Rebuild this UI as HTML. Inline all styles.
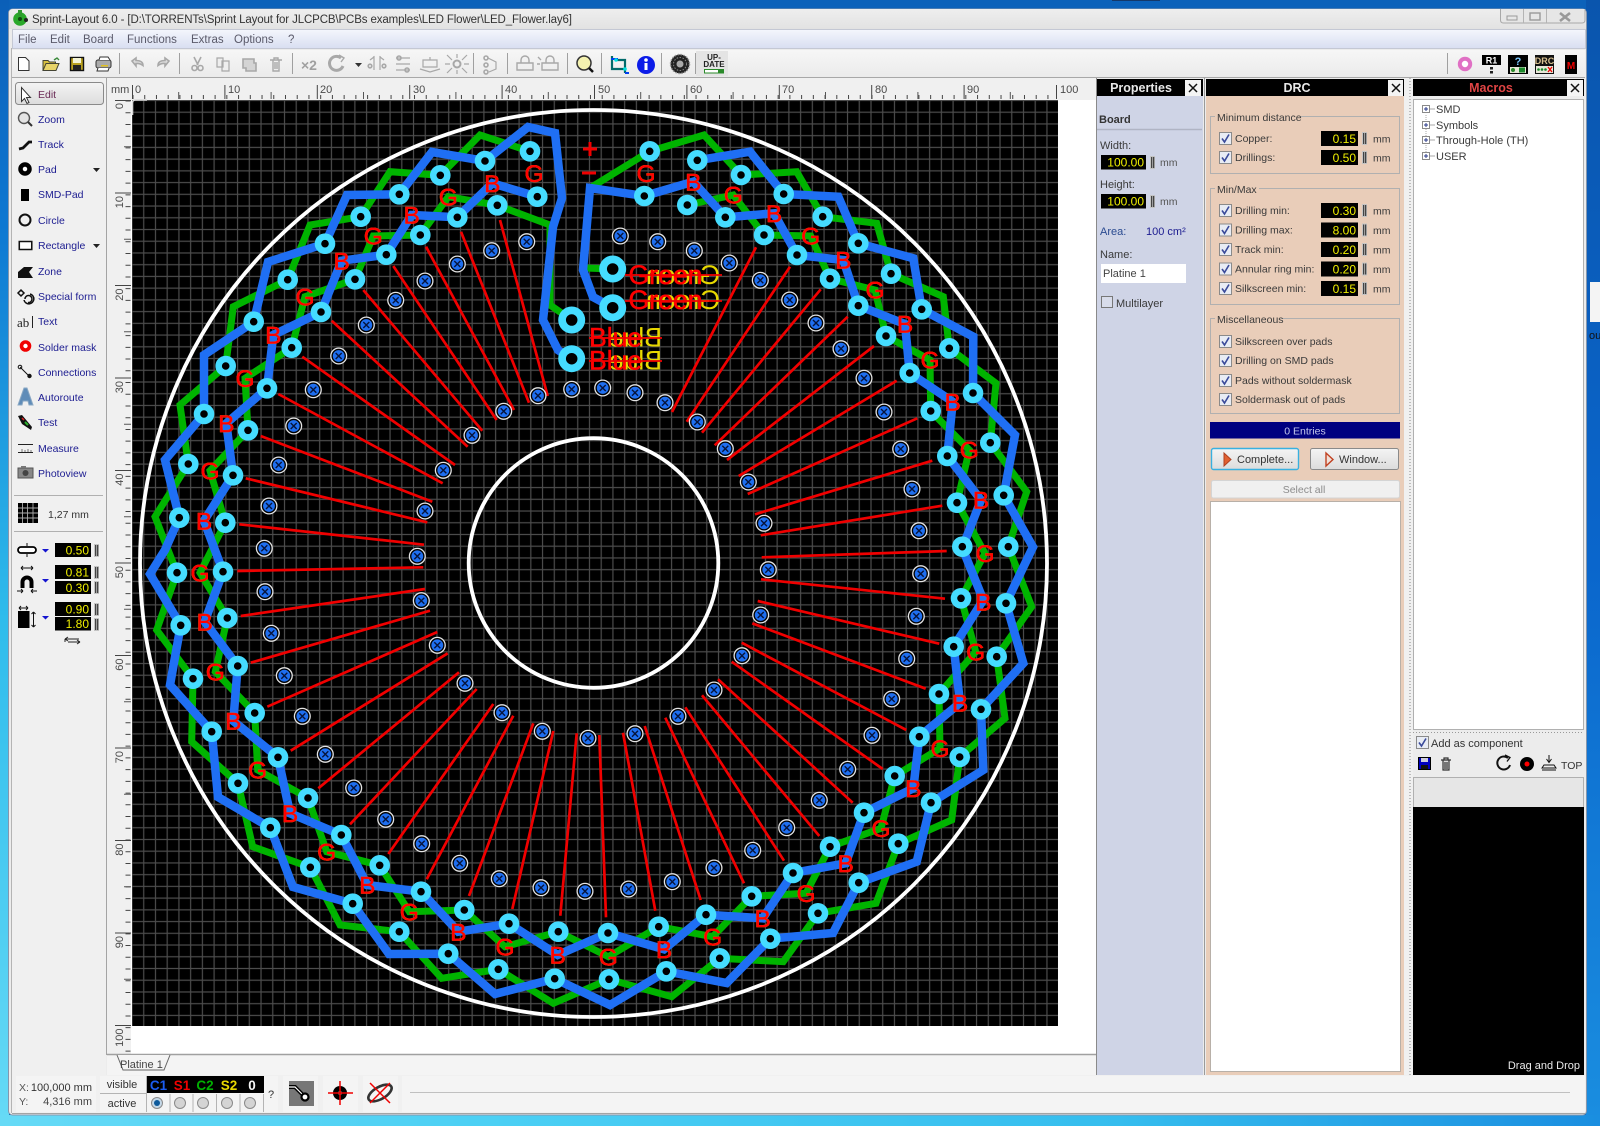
<!DOCTYPE html>
<html><head><meta charset="utf-8"><title>Sprint-Layout 6.0</title>
<style>
html,body{margin:0;padding:0;background:#0d62b8;overflow:hidden}
svg{display:block;filter:blur(.35px)}
text{font-family:"Liberation Sans",sans-serif;font-size:10.5px;fill:#3a3a3a}
.n text,text.n{fill:#1c1c90}
.m{font-size:11.5px;fill:#5a5a6a}
.y{font-size:12px;fill:#f0f000;text-anchor:end}
.h{font-size:12.5px;font-weight:bold;fill:#e8e8e8;text-anchor:middle}
.r{font-size:11px;fill:#4a4a4a}
.l{filter:drop-shadow(.7px .7px 0 #e0d000)}
.l text{font-size:24.5px;fill:#f00;text-anchor:middle;stroke:#f00;stroke-width:.45}
.s{font-size:26.6px;fill:#f00;stroke:#f00;stroke-width:.5}
.sy{font-size:26.6px;fill:#e8d800}
.ly{font-size:13.5px;font-weight:bold;text-anchor:middle}
</style></head><body>
<svg xmlns="http://www.w3.org/2000/svg" width="1600" height="1126" viewBox="0 0 1600 1126">
<defs>
<linearGradient id="bgL" x1="0" y1="0" x2="0" y2="1"><stop offset="0" stop-color="#0b5fb8"/><stop offset=".2" stop-color="#0d78d2"/><stop offset=".55" stop-color="#2fbcec"/><stop offset="1" stop-color="#66daf6"/></linearGradient>
<linearGradient id="bgR" x1="0" y1="0" x2="0" y2="1"><stop offset="0" stop-color="#0a55ad"/><stop offset=".5" stop-color="#0a66cc"/><stop offset="1" stop-color="#1a8ee0"/></linearGradient>
<linearGradient id="bgB" x1="0" y1="0" x2="1" y2="0"><stop offset="0" stop-color="#66daf6"/><stop offset=".3" stop-color="#4cd0f4"/><stop offset=".7" stop-color="#35bdee"/><stop offset="1" stop-color="#1a8ee0"/></linearGradient>
<linearGradient id="tit" x1="0" y1="0" x2="0" y2="1"><stop offset="0" stop-color="#eeeeee"/><stop offset="1" stop-color="#e2e2e2"/></linearGradient>
<linearGradient id="men" x1="0" y1="0" x2="0" y2="1"><stop offset="0" stop-color="#f4f6fc"/><stop offset="1" stop-color="#d8def1"/></linearGradient>
<linearGradient id="tb" x1="0" y1="0" x2="0" y2="1"><stop offset="0" stop-color="#f6f6f6"/><stop offset="1" stop-color="#ebebeb"/></linearGradient>
<linearGradient id="btn" x1="0" y1="0" x2="0" y2="1"><stop offset="0" stop-color="#f4f4f4"/><stop offset="1" stop-color="#dcdcdc"/></linearGradient>
<pattern id="grid" x="131" y="99.5" width="11.73" height="11.73" patternUnits="userSpaceOnUse"><path d="M0 1H11.73M1 0V11.73" stroke="#4c4c4c" stroke-width="1.2" fill="none"/></pattern>
<g id="v"><circle r="7.9" fill="#000" stroke="#e4e4e4" stroke-width="1.3"/><circle r="5.9" fill="#1f6ff0"/><path d="M-3-3L3 3M3-3L-3 3" stroke="#06143c" stroke-width="1.4" fill="none"/></g>
<g id="ck"><rect x=".5" y=".5" width="12" height="12" fill="#e8ecf4" stroke="#8a8a8a"/><path d="M3 6.5L5.5 10L10 2.5" fill="none" stroke="#3a4a9a" stroke-width="1.6"/></g>
<g id="sp"><rect width="5" height="13" fill="#c4c4c4"/><rect x="1" y="1" width="1.3" height="11" fill="#444"/><rect x="3" y="1" width="1.3" height="11" fill="#444"/></g>
<path id="pads" d="M530 151.3h0M485 161h0M537.3 196.7h0M440.3 175.3h0M497.3 205.3h0M457.3 217.3h0M399.3 194.3h0M360.7 216.7h0M420.3 235h0M386.3 254.7h0M325 243.7h0M287.7 279.7h0M355 279.3h0M321 312h0M253.7 321.7h0M225.7 366h0M291.7 347.7h0M267 388.3h0M204 414h0M248 430.3h0M188.3 464h0M233 475.3h0M179.3 517.7h0M225.3 522.7h0M177 572.7h0M223 571.7h0M180.7 625.3h0M227.3 618h0M193 678.7h0M237.7 666h0M211.7 731.7h0M254.7 713h0M238 783.3h0M278 757.3h0M270.3 827.7h0M308 798h0M310.3 867.3h0M341.3 835h0M352.7 903.7h0M379.7 865.3h0M399.3 931.7h0M421 891.7h0M448.3 953.7h0M464.3 910h0M498.3 969.3h0M509 923.7h0M554.7 978.7h0M558.3 931.7h0M608 933h0M609 979.3h0M658.7 926.7h0M666.3 971.3h0M706 914.7h0M719.7 958.3h0M751.7 896.3h0M770.3 938.7h0M793 873h0M818 913.3h0M830 846.7h0M858.7 882.7h0M864 812.7h0M898.3 843.7h0M894.7 776h0M931 802.7h0M919.3 736.7h0M959.7 757h0M939 694h0M981 709.3h0M953.7 646.7h0M996.7 656.7h0M961 598.3h0M1006 603.3h0M962.3 546.7h0M1008.3 546.7h0M957 502.7h0M1003.7 495.3h0M947.3 456h0M990.3 442.7h0M930.7 411h0M973 393h0M909.7 373h0M949.3 348.3h0M886 336h0M921.7 309.3h0M858.3 305.7h0M891 273.7h0M830 278.7h0M858.3 243.3h0M797 255h0M822.7 216.7h0M764 235h0M783.7 194h0M725.3 217.3h0M741 175h0M687.3 205h0M697.3 160.3h0M644.3 196h0M649.7 151.3h0"/>
<path id="big" d="M612.7 269h0M612.7 307.7h0M571.7 320h0M571.7 358.7h0"/>
</defs>

<!-- desktop -->
<rect width="1600" height="1126" fill="#0c62ba"/>
<rect x="0" y="0" width="9" height="1126" fill="url(#bgL)"/>
<rect x="1586" y="0" width="14" height="1126" fill="url(#bgR)"/>
<rect x="0" y="1115" width="1600" height="11" fill="url(#bgB)"/>
<rect x="1590" y="282" width="10" height="40" fill="#f4f4f4"/>
<text x="1589" y="339" style="font-size:11px;fill:#111">ou</text>
<rect x="1112" y="0" width="48" height="1" fill="#14386a"/>

<!-- window -->
<rect x="8.5" y="9" width="1578" height="1106" rx="4" fill="#ececec" stroke="#8496ad"/>
<path d="M9 29V13q0-4 4-4H1582q4 0 4 4V29z" fill="url(#tit)"/>
<g transform="translate(20,18)"><circle cy="1" r="6.8" fill="#2aa82a"/><rect x="-2" y="-8" width="4" height="6" fill="#2f9a2f"/><circle cy="1" r="2" fill="#0e4a0e"/><circle cx="6" cy="2" r="2" fill="#222"/></g>
<text x="32" y="23" textLength="540" style="font-size:11.5px;fill:#333">Sprint-Layout 6.0 - [D:\TORRENTs\Sprint Layout for JLCPCB\PCBs examples\LED Flower\LED_Flower.lay6]</text>
<!-- window controls -->
<path d="M1500.5 9V20q0 3 3 3H1582q3 0 3-3V9" fill="#e6e6e6" stroke="#a8a8a8"/>
<path d="M1523.5 9V23M1546.5 9V23" stroke="#b4b4b4"/>
<rect x="1507" y="16" width="10" height="4" fill="none" stroke="#999"/>
<rect x="1530" y="13" width="10" height="7" fill="none" stroke="#999" stroke-width="1.4"/>
<path d="M1560 13L1570 21M1570 13L1560 21" stroke="#999" stroke-width="2.6"/>
<!-- menu -->
<rect x="12.5" y="29.5" width="1573" height="19" fill="url(#men)" stroke="#c4c8d4"/>
<g class="m"><text class="m" x="18" y="43">File</text><text class="m" x="50" y="43">Edit</text><text class="m" x="83" y="43">Board</text><text class="m" x="127" y="43">Functions</text><text class="m" x="191" y="43">Extras</text><text class="m" x="234" y="43">Options</text><text class="m" x="288" y="43">?</text></g>
<!-- toolbar -->
<rect x="12" y="50" width="1573" height="27" fill="url(#tb)"/>
<path d="M12 77.5H1585" stroke="#a8a8a8"/>
<path d="M119.5 53V74M179.5 53V74M292.5 53V74M473.5 53V74M507.5 53V74M567.5 53V74M601.5 53V74M661.5 53V74M695.5 53V74M1447.5 53V74" stroke="#a0a0a0"/>
<rect x="696" y="51" width="32" height="25" fill="#e4e4e4"/>
<!-- file icons -->
<path d="M18.500 57.500h7l3.500 3.500v9.500h-10.500z" fill="#fff" stroke="#333"/>
<path d="M43 70.500v-10h5l1.500 1.500h6v2" fill="#d8c040" stroke="#443"/><path d="M43 70.500l3-7h13l-3 7z" fill="#e8d468" stroke="#443"/><path d="M54 60l3-2 2 2" fill="none" stroke="#3a8a3a" stroke-width="1.4"/>
<rect x="70.500" y="57.500" width="13" height="13" fill="#b8a020" stroke="#111" stroke-width="1.4"/><rect x="73" y="58" width="8" height="5" fill="#f4f4d8"/><rect x="73" y="65" width="8" height="5" fill="#222"/>
<rect x="96" y="60" width="15" height="8" rx="2" fill="#aaa" stroke="#333"/><path d="M99 60l1-3h8l2 3M98 68l-1 3h11l1-3" fill="#fff" stroke="#333"/><rect x="101" y="65" width="7" height="1.500" fill="#e0c020"/>
<!-- gray icons -->
<g fill="none" stroke="#a8a8a8" stroke-width="1.6">
<path d="M132 61l4-3v2.500q7 0 7 5q-3-2.500-7-2v2.500z" fill="#ddd"/>
<path d="M169 61l-4-3v2.500q-7 0-7 5q3-2.500 7-2v2.500z" fill="#ddd"/>
<path d="M194 57l4 8M201 57l-4 8"/><circle cx="194.500" cy="68" r="2.500"/><circle cx="200.500" cy="68" r="2.500"/>
<path d="M217 58h6v9h-6zM222 61h7v10h-7z" fill="#eee" stroke-width="1.200"/>
<path d="M243 59h11v4h2v8h-10v-3h-3z" fill="#d4d4d4"/>
<path d="M270 60h12M273 60v11h6v-11M274 60v-2h4v2M275 62v7M277 62v7" stroke-width="1.400"/>
<path d="M341 58a7 7 0 1 0 2 8" stroke-width="3"/><path d="M339 55l5 3-3 4" stroke-width="1.400"/>
<path d="M374 56v14M380 56v14M370 60l4-3v6M384 60l-4-3v6" stroke-width="1.200"/><circle cx="370" cy="66" r="1.800"/><circle cx="384" cy="66" r="1.800"/>
<path d="M396 58h14M396 64h14M396 70h14" stroke-width="1.200"/><circle cx="399" cy="58" r="2"/><circle cx="407" cy="70" r="2"/>
<path d="M423 60h14v7h-14zM420 69l10 3 10-3M430 57v3" stroke-width="1.200"/>
<circle cx="457" cy="64" r="3.500" stroke-width="2"/><path d="M447 55l5 5M467 55l-5 5M447 73l5-5M467 73l-5-5M445 64h5M464 64h5M457 54v4M457 70v4" stroke-width="1.200"/>
<circle cx="486" cy="58" r="2"/><circle cx="486" cy="65" r="2"/><circle cx="486" cy="72" r="2"/><path d="M488 58l8 4v7l-7 3" stroke-width="1.200"/>
<path d="M521 63v-3a4 4 0 0 1 8 0v3M517 63h16v7h-16z" stroke-width="1.400"/>
<path d="M546 63v-3a4 4 0 0 1 8 0v3M542 63h16v7h-16zM538 57l3 3M540 64h-3" stroke-width="1.400"/>
</g>
<text x="301" y="70" style="font-size:14px;font-weight:bold;fill:#a0a0a0">×2</text>
<path d="M355 63h7l-3.500 4z" fill="#333"/>
<!-- search -->
<circle cx="584" cy="63" r="7" fill="#f4f2b0" stroke="#333" stroke-width="1.500"/><path d="M589 68l4 4" stroke="#111" stroke-width="2.500"/>
<path d="M612 56v13h13M616 60h9v13" fill="none" stroke="#006a6a" stroke-width="2.200"/><path d="M611 59h7M625 73h4" stroke="#0040f0" stroke-width="2"/><circle cx="616" cy="60" r="1.800" fill="#00e0e0"/><circle cx="625" cy="69" r="1.800" fill="#00e0e0"/>
<circle cx="646" cy="65" r="9" fill="#0c1ce8"/><rect x="644.500" y="63" width="3" height="7" fill="#fff"/><circle cx="646" cy="60" r="1.800" fill="#fff"/>
<circle cx="680" cy="64" r="9.500" fill="#222"/><circle cx="680" cy="64" r="9.500" fill="none" stroke="#999" stroke-width="1.500" stroke-dasharray="1.500 1.500"/><circle cx="680" cy="64" r="3.500" fill="#aaa"/><circle cx="680" cy="64" r="6.500" fill="none" stroke="#888" stroke-dasharray="1.500 1.500"/>
<text x="714" y="60" style="font-size:8px;font-weight:bold;fill:#222;text-anchor:middle">UP-</text>
<text x="714" y="67" style="font-size:8px;font-weight:bold;fill:#222;text-anchor:middle">DATE</text>
<rect x="704.500" y="69.500" width="19" height="3.500" fill="#fff" stroke="#2a8a2a"/><rect x="718" y="70" width="5" height="3" fill="#2a8a2a"/>
<!-- right toolbar -->
<circle cx="1465" cy="64" r="5.200" fill="#fff" stroke="#e070c4" stroke-width="4"/>
<rect x="1482" y="55" width="19" height="10" fill="#000"/><text x="1491.500" y="63.500" style="font-size:9px;font-weight:bold;fill:#fff;text-anchor:middle">R1</text><rect x="1490" y="67" width="3" height="2.500" fill="#222"/><rect x="1490" y="71" width="3" height="2.500" fill="#222"/>
<rect x="1508" y="55" width="20" height="19" fill="#000"/><text x="1518" y="65" style="font-size:11px;font-weight:bold;fill:#7cc8ff;text-anchor:middle">?</text><rect x="1510" y="67" width="16" height="6" fill="#e8e8d8"/><circle cx="1513" cy="70" r="2" fill="#2a8a2a"/><rect x="1519" y="67.500" width="6" height="5" fill="#1a8a2a"/>
<rect x="1535" y="55" width="19" height="19" fill="#111"/><text x="1544.500" y="64" style="font-size:9px;font-weight:bold;fill:#d8c090;text-anchor:middle">DRC</text><rect x="1536" y="66" width="17" height="7" fill="#e8e8d8"/><circle cx="1538.500" cy="69.500" r="1.300" fill="#1a8a2a"/><circle cx="1542" cy="69.500" r="1.300" fill="#1a8a2a"/><circle cx="1545.500" cy="69.500" r="1.300" fill="#1a8a2a"/><path d="M1548 67l4 5M1552 67l-4 5" stroke="#e00" stroke-width="1.300"/>
<rect x="1565" y="55" width="12" height="19" fill="#000"/><text x="1571" y="69" style="font-size:10px;font-weight:bold;fill:#f00000;text-anchor:middle">M</text>

<!-- left panel -->
<rect x="12" y="78" width="94" height="997" fill="#f0f0f0"/>
<path d="M11.500 48V1113" stroke="#b4b4b4"/>
<path d="M106.500 78V1055" stroke="#a4a4a4"/>
<rect x="15.500" y="82.500" width="88" height="22" rx="3" fill="url(#btn)" stroke="#8a8a8a"/>
<text x="38" y="98" style="fill:#6a2a55;font-size:10.5px">Edit</text>
<g class="n">
<text x="38" y="123">Zoom</text><text x="38" y="148">Track</text><text x="38" y="173">Pad</text><text x="38" y="198">SMD-Pad</text><text x="38" y="224">Circle</text><text x="38" y="249">Rectangle</text><text x="38" y="275">Zone</text><text x="38" y="300">Special form</text><text x="38" y="325">Text</text><text x="38" y="351">Solder mask</text><text x="38" y="376">Connections</text><text x="38" y="401">Autoroute</text><text x="38" y="426">Test</text><text x="38" y="452">Measure</text><text x="38" y="477">Photoview</text>
</g>
<path d="M93 168h7l-3.500 4zM93 244h7l-3.500 4z" fill="#222"/>
<!-- tool icons -->
<path d="M21.500 87.500v14l3-3 2.500 5 2-1-2.500-5h4z" fill="#fff" stroke="#333"/>
<circle cx="24" cy="118" r="5.500" fill="#e4e4e4" stroke="#555" stroke-width="1.400"/><path d="M28 122l4 4" stroke="#333" stroke-width="2"/>
<path d="M19 149l4-1 6-6 3 0" fill="none" stroke="#111" stroke-width="2.800"/>
<circle cx="25" cy="169" r="4.500" fill="#fff" stroke="#000" stroke-width="4.500"/>
<rect x="21" y="189" width="8" height="12" fill="#000"/>
<circle cx="25" cy="220" r="5.500" fill="none" stroke="#111" stroke-width="2"/>
<rect x="19.500" y="241.500" width="12" height="8" fill="#fff" stroke="#111" stroke-width="1.500" transform="translate(-1,0) scale(1.04,1)"/>
<path d="M18 278v-6l6-5h9l-4 5 4 6z" fill="#111"/>
<path d="M18 293l3-3 3 3-3 3zM25 299a3.500 3.500 0 1 1 3 3.500M24 300a5 5 0 1 0 6-6" fill="none" stroke="#111" stroke-width="1.500"/>
<text x="17" y="327" style="font-family:'Liberation Serif';font-size:13px;fill:#222">ab</text><path d="M32.500 316v12" stroke="#222"/>
<circle cx="25.500" cy="346" r="4" fill="#fff" stroke="#f00000" stroke-width="3.600"/>
<path d="M20 367l9 9" stroke="#111"/><circle cx="20" cy="367" r="1.800" fill="none" stroke="#111"/><circle cx="29.500" cy="376" r="2.200" fill="#111"/>
<path d="M18 405l6-17h3l6 17h-4l-1-4h-5l-1 4z" fill="#5f8cb8" stroke="#8aa8c4"/>
<path d="M18 416l4-1 10 12-1 3-9-6z" fill="#111"/><path d="M25 422l3 3" stroke="#2ab02a" stroke-width="2"/><path d="M22 418l2 2" stroke="#e02020" stroke-width="1.500"/>
<path d="M18 444.500h15M18 452.500h15" stroke="#222"/><path d="M22 449v3M25 450v2M28 449v3M31 450v2" stroke="#777"/>
<rect x="18" y="468" width="15" height="10" fill="#888" stroke="#555"/><circle cx="25.500" cy="473" r="3" fill="#444"/><rect x="21" y="466" width="5" height="2" fill="#777"/>
<path d="M14 495.500H103M14 531.500H103" stroke="#b0b0b0"/>
<rect x="18" y="503" width="20" height="20" fill="#000"/><path d="M22.500 503v20M27.500 503v20M33 503v20M18 508h20M18 513h20M18 518h20" stroke="#aaa" stroke-width=".9"/>
<text x="48" y="518" style="font-size:10.5px;fill:#333">1,27 mm</text>
<!-- numeric fields left -->
<rect x="55" y="543" width="36" height="14" fill="#000"/><text class="y" x="89" y="554.500">0.50</text>
<rect x="55" y="565" width="36" height="14" fill="#000"/><text class="y" x="89" y="576.500">0.81</text>
<rect x="55" y="581" width="36" height="13" fill="#000"/><text class="y" x="89" y="592">0.30</text>
<rect x="55" y="602" width="36" height="14" fill="#000"/><text class="y" x="89" y="613.500">0.90</text>
<rect x="55" y="617" width="36" height="13.500" fill="#000"/><text class="y" x="89" y="628">1.80</text>
<use href="#sp" x="94" y="544"/><use href="#sp" x="94" y="566"/><use href="#sp" x="94" y="581"/><use href="#sp" x="94" y="603"/><use href="#sp" x="94" y="618"/>
<rect x="18" y="547" width="18" height="6" rx="3" fill="#fff" stroke="#000" stroke-width="1.800"/><path d="M27 543v3M27 554v3" stroke="#111"/>
<path d="M42 549h7l-3.500 3.500z M42 579h7l-3.500 3.500z M42 616h7l-3.500 3.500z" fill="#1414d0"/>
<path d="M21 568h12M21 568l2-2M21 568l2 2M33 568l-2-2M33 568l-2 2" stroke="#111" fill="none"/>
<path d="M20.500 588v-6a6.500 6.500 0 0 1 13 0v6h-4v-6a2.500 2.500 0 0 0-5 0v6z" fill="#000"/>
<path d="M17 591h6M31 591h6M23 591l-2-2M23 591l-2 2M31 591l2-2M31 591l2 2" stroke="#111" fill="none"/>
<path d="M19 608h9M19 608l2-2M19 608l2 2M28 608l-2-2M28 608l-2 2" stroke="#111" fill="none"/>
<rect x="18" y="611" width="11.500" height="17" fill="#000"/>
<path d="M33.500 612v15M33.500 612l-2 2M33.500 612l2 2M33.500 627l-2-2M33.500 627l2-2" stroke="#111" fill="none"/>
<path d="M65 639h14M65 639l3-2M65 639l3 2M65 639v3M68 642h12M80 642l-3-2M80 642l-3 2" stroke="#222" fill="none" stroke-width="1"/>

<!-- ruler + canvas bg -->
<rect x="107" y="78" width="989" height="977" fill="#f0f0f0"/>
<rect x="131" y="100" width="965" height="955" fill="#fff"/>
<path d="M1096.500 78V1075" stroke="#8a8a8a"/>
<!-- H ruler -->
<text class="r" x="111" y="93">mm</text>
<path d="M132.500 85V99M224.900 85V99M317.300 85V99M409.700 85V99M502.100 85V99M594.500 85V99M686.900 85V99M779.300 85V99M871.700 85V99M964.100 85V99M1056.500 85V99" stroke="#444"/>
<path d="M132.500 97H1058" stroke="#444" stroke-width="4" stroke-dasharray="1 10.73"/>
<path d="M178.700 92V99H178.700M271.100 92V99M363.500 92V99M455.900 92V99M548.300 92V99M640.700 92V99M733.100 92V99M825.500 92V99M917.900 92V99M1010.300 92V99" stroke="#555"/>
<text class="r" x="135" y="93">0</text><text class="r" x="228" y="93">10</text><text class="r" x="320" y="93">20</text><text class="r" x="413" y="93">30</text><text class="r" x="505" y="93">40</text><text class="r" x="598" y="93">50</text><text class="r" x="690" y="93">60</text><text class="r" x="782" y="93">70</text><text class="r" x="875" y="93">80</text><text class="r" x="967" y="93">90</text><text class="r" x="1060" y="93">100</text>
<!-- V ruler -->
<path d="M115 100.500H131M115 193H131M115 285.500H131M115 378H131M115 470.500H131M115 563H131M115 655.500H131M115 748H131M115 840.500H131M115 933H131M115 1025.500H131" stroke="#444"/>
<path d="M128 100.500V1052" stroke="#444" stroke-width="5" stroke-dasharray="1 10.73"/>
<path d="M124 146.800H131M124 239.200H131M124 331.700H131M124 424.200H131M124 516.700H131M124 609.200H131M124 701.700H131M124 794.200H131M124 886.700H131M124 979.200H131" stroke="#555"/>
<g class="r"><text class="r" transform="translate(123,103) rotate(-90)" text-anchor="end">0</text><text class="r" transform="translate(123,196) rotate(-90)" text-anchor="end">10</text><text class="r" transform="translate(123,288.500) rotate(-90)" text-anchor="end">20</text><text class="r" transform="translate(123,381) rotate(-90)" text-anchor="end">30</text><text class="r" transform="translate(123,473.500) rotate(-90)" text-anchor="end">40</text><text class="r" transform="translate(123,566) rotate(-90)" text-anchor="end">50</text><text class="r" transform="translate(123,658.500) rotate(-90)" text-anchor="end">60</text><text class="r" transform="translate(123,751) rotate(-90)" text-anchor="end">70</text><text class="r" transform="translate(123,843.500) rotate(-90)" text-anchor="end">80</text><text class="r" transform="translate(123,936) rotate(-90)" text-anchor="end">90</text><text class="r" transform="translate(123,1028.500) rotate(-90)" text-anchor="end">100</text></g>

<!-- BOARD -->
<rect x="132" y="100" width="926" height="926" fill="#000"/>
<rect x="132" y="100" width="926" height="926" fill="url(#grid)"/>
<path d="M132.500 115V103q0-3 3-3H147" fill="none" stroke="#d8d8d8" stroke-width="1.600"/>
<circle cx="593.500" cy="563.500" r="453.500" fill="none" stroke="#fff" stroke-width="3.800"/>
<circle cx="593.500" cy="563" r="124.800" fill="none" stroke="#fff" stroke-width="3.800"/>
<!-- green -->
<g fill="none" stroke="#00b400" stroke-width="7" stroke-linejoin="miter">
<path d="M590 188L649.700 151.300L704 135L741 175L796.700 171.700L822.700 216.700L876.700 223.300L891 273.700L943.300 296.700L949.300 348.300L996 383.300L990.300 442.700L1026.700 491.700L1008.300 546.700L1031.700 606.700L996.700 656.700L1005 718.300L959.700 757L951.700 820L898.300 843.700L876 903.300L818 913.300L783.300 961.700L719.700 958.300L671.700 996.700L609 979.300L553.300 1003.300L498.300 969.300L441.700 978.300L399.300 931.700L340 925L310.300 867.300L252.700 846.700L238 783.300L191.700 741.700L193 678.700L156.700 630L177 572.700L155 516.700L188.300 464L180 405L225.700 366L233.300 306.700L287.700 279.700L310 225L360.700 216.700L390 171.700L440.300 175.300L480 135L530 151.300"/>
<path d="M612.700 269L585 268"/>
<path d="M571.700 320L550 305L550 225L497.300 205.300L448.300 196.700L420.300 235L373.300 236L355 279.300L305 296.700L291.700 347.700L245 378.300L248 430.300L210 470.700L225.300 522.700L200 572.700L227.300 618L215.300 671.700L254.700 713L257.700 770L308 798L326.700 851.700L379.700 865.300L409.300 911.700L464.300 910L505 946.700L558.300 931.700L608.300 956.700L658.700 926.700L712.700 936.700L751.700 896.300L806 893.300L830 846.700L881 828.300L894.700 776L940 748.300L939 694L975.700 651.700L961 598.300L985 553.300L957 502.700L969.300 450L930.700 411L930 360L886 336L875 290L830 278.700L810.700 236L764 235L733.300 195L687.300 205"/>
</g>
<!-- blue -->
<g fill="none" stroke="#1f6ff4" stroke-width="8.500" stroke-linejoin="miter">
<path d="M571.700 358.700L558 350L543 320L553 227L562 198L555 133L528 127L485 161L432 152L399.300 194.300L347 195L325 243.700L268 262L253.700 321.700L204 355L204 414L165 460L179.300 517.700L165 550L150 574L180.700 625.300L170 685L211.700 731.700L218 797L270.300 827.700L293 887L352.700 903.700L389 954L448.300 953.700L495 994L554.700 978.700L610 1005L666.300 971.300L726.700 983L770.300 938.700L833 933L858.700 882.700L916.700 861.700L931 802.700L983.300 770L981 709.300L1023.300 663.300L1006 603.300L1033 547L1003.700 495.300L1015 435L973 393L973.300 336.700L921.700 309.300L913.300 258.300L858.300 243.300L838.300 196.700L783.700 194L750 151.700L697.300 160.300"/>
<path d="M612.700 307.700L593 297L583 270L590 188L644.300 196L693.300 181.700L725.300 217.300L774 213.300L797 255L843.300 260L858.300 305.700L905 324L909.700 373L952.700 401.700L947.300 456L981 500L962.300 548L983.300 600L953.700 646.700L960 703L919.300 736.700L913.300 788.300L864 812.700L845.700 863.300L793 873L762.700 918.300L706 914.700L664 949.300L608 933L557.700 955L509 923.700L458.300 931.700L421 891.700L367.300 885L341.300 835L290 813.300L278 757.300L233.300 721L237.700 666L204.700 621.700L223 571.700L204 520.700L233 475.300L226.300 423.300L267 388.300L273.300 335L321 312L341.700 260.700L386.300 254.700L411.700 215L457.300 217.300L492.300 183.300L537.300 196.700"/>
</g>
<!-- red traces -->
<path fill="none" stroke="#f00000" stroke-width="2.700" d="M500 220L547.700 396M461 231.700L529 402.700M426 246.700L514 410M393.300 266L496.700 420M363.300 290L482.300 430.700M331.700 320.700L467.700 446.700M302.300 356.700L455 465M278.300 394L442.700 483.300M260.700 436L432.300 501.700M245.700 478.300L427.300 522.300M239.300 524.300L424 544.700M237.300 571L423.300 567.300M240.700 616L425 589M250.700 662.700L430 610.700M267.300 706.700L437.300 632M290.700 750.700L447.700 653.300M318.300 788.300L459 672.300M350 824.300L476.700 689M388.300 854L493.300 704M426.700 879.300L513.300 715.700M469 896L533.300 723.300M512.300 909L553.300 731M560.300 915.700L576.700 733.300M606 917.300L599.300 735M655.300 910.700L623 732.700M700.700 900L644.700 726M744 883.300L665.300 717.700M784 860.700L685.300 707.300M819.300 836L702 695.300M852.700 802.700L718 679.300M882.700 769L731.700 661.700M906.300 730L741.700 642.700M925.700 688.700L752.300 623.300M939.300 643.700L757.700 601M945 598.700L761 579.300M946.700 551L761.700 557.300M942.300 505.700L760.700 535.300M932.300 460.700L755 514.300M917.300 418.300L747.700 494M896.700 380.700L738.700 476M874 346L727 460M847.700 316.700L714.700 445.300M820.700 289.300L702 432.700M790 266.700L686.700 421.700M756 247.300L672 412"/>
<!-- pads -->
<use href="#pads" fill="none" stroke="#45dcff" stroke-width="20.600" stroke-linecap="round"/>
<use href="#pads" fill="none" stroke="#000" stroke-width="7.600" stroke-linecap="round"/>
<use href="#big" fill="none" stroke="#45dcff" stroke-width="27" stroke-linecap="round"/>
<use href="#big" fill="none" stroke="#000" stroke-width="11.500" stroke-linecap="round"/>
<!-- vias -->
<use href="#v" x="526.7" y="241.7"/><use href="#v" x="491.7" y="250.7"/><use href="#v" x="457.3" y="264"/><use href="#v" x="425" y="281"/><use href="#v" x="395.7" y="300.3"/><use href="#v" x="366.3" y="325"/><use href="#v" x="338.7" y="356"/><use href="#v" x="313.3" y="389.7"/><use href="#v" x="293.7" y="426"/><use href="#v" x="278.7" y="465"/><use href="#v" x="269" y="506"/><use href="#v" x="264.3" y="548.3"/>
<use href="#v" x="538" y="395.7"/><use href="#v" x="571.7" y="389.3"/><use href="#v" x="503.7" y="411.3"/><use href="#v" x="472" y="435.3"/><use href="#v" x="443.3" y="470.3"/><use href="#v" x="425" y="511"/><use href="#v" x="417.3" y="556.3"/>
<use href="#v" x="265" y="591.7"/><use href="#v" x="421.3" y="600.7"/><use href="#v" x="271.3" y="633.3"/><use href="#v" x="437.3" y="645.3"/><use href="#v" x="284.3" y="675.7"/><use href="#v" x="465" y="683.3"/><use href="#v" x="302.3" y="716.3"/><use href="#v" x="502" y="712.7"/><use href="#v" x="325.3" y="754.3"/><use href="#v" x="542.3" y="731.3"/><use href="#v" x="353.7" y="788"/><use href="#v" x="385.7" y="819.3"/><use href="#v" x="421.7" y="843.7"/><use href="#v" x="459.7" y="863.3"/><use href="#v" x="499.3" y="878.7"/><use href="#v" x="541" y="887.7"/>
<use href="#v" x="588" y="738.3"/><use href="#v" x="635" y="733.7"/><use href="#v" x="678" y="716.3"/><use href="#v" x="714" y="690"/><use href="#v" x="742" y="655.7"/><use href="#v" x="760.7" y="615"/><use href="#v" x="768.3" y="569.7"/>
<use href="#v" x="585" y="891.3"/><use href="#v" x="628.7" y="889"/><use href="#v" x="672.3" y="881.7"/><use href="#v" x="714" y="868"/><use href="#v" x="752.7" y="850.3"/><use href="#v" x="786.7" y="827.7"/><use href="#v" x="819.3" y="800.3"/><use href="#v" x="847.7" y="769.3"/><use href="#v" x="872" y="735.3"/><use href="#v" x="891.7" y="699"/><use href="#v" x="906.7" y="658.7"/><use href="#v" x="916.3" y="616.3"/><use href="#v" x="920.7" y="573.7"/>
<use href="#v" x="919" y="530.7"/><use href="#v" x="912" y="489"/><use href="#v" x="900.7" y="449"/><use href="#v" x="884" y="412"/><use href="#v" x="864" y="378.3"/><use href="#v" x="841" y="348.7"/><use href="#v" x="816" y="323"/><use href="#v" x="789.7" y="300"/><use href="#v" x="760.3" y="280.3"/><use href="#v" x="729.3" y="263"/><use href="#v" x="694.3" y="250.7"/><use href="#v" x="657.7" y="241.7"/><use href="#v" x="620.3" y="236"/>
<use href="#v" x="602.7" y="388"/><use href="#v" x="635" y="392.7"/><use href="#v" x="665" y="402.7"/><use href="#v" x="697.3" y="422"/><use href="#v" x="725.3" y="448.7"/><use href="#v" x="748.3" y="482"/><use href="#v" x="764" y="523.3"/>
<!-- silks -->
<g class="l">
<text x="534" y="182">G</text><text x="448.3" y="205.5">G</text><text x="373.3" y="244.5">G</text><text x="305" y="305.5">G</text><text x="245" y="387">G</text><text x="210" y="479.5">G</text><text x="200" y="581.5">G</text><text x="215.3" y="680.5">G</text><text x="257.7" y="778.5">G</text><text x="326.7" y="860.5">G</text><text x="409.3" y="920.5">G</text><text x="505" y="955.5">G</text><text x="608.3" y="965.5">G</text><text x="712.7" y="945.5">G</text><text x="806" y="902">G</text><text x="881" y="837">G</text><text x="940" y="757">G</text><text x="975.7" y="660.5">G</text><text x="985" y="562">G</text><text x="969.3" y="458.5">G</text><text x="930" y="368.5">G</text><text x="875" y="298.5">G</text><text x="810.7" y="244.5">G</text><text x="733.3" y="203.5">G</text><text x="646" y="182">G</text>
<text x="492.3" y="192">B</text><text x="411.7" y="223.5">B</text><text x="341.7" y="269.5">B</text><text x="273.3" y="343.5">B</text><text x="226.3" y="432">B</text><text x="204" y="529.5">B</text><text x="204.7" y="630.5">B</text><text x="233.3" y="729.5">B</text><text x="290" y="822">B</text><text x="367.3" y="893.5">B</text><text x="458.3" y="940.5">B</text><text x="557.7" y="963.5">B</text><text x="664" y="958">B</text><text x="762.7" y="927">B</text><text x="845.7" y="872">B</text><text x="913.3" y="797">B</text><text x="960" y="711.5">B</text><text x="983.3" y="610.5">B</text><text x="981" y="508.5">B</text><text x="952.7" y="410.5">B</text><text x="905" y="332.5">B</text><text x="843.3" y="268.5">B</text><text x="774" y="222">B</text><text x="693.3" y="190.5">B</text>
</g>
<path d="M583 149h14M590 142v14M582 173h14" stroke="#f00000" stroke-width="3" fill="none"/>
<text class="sy" transform="translate(720,284) scale(-1,1)">Green</text>
<text class="sy" transform="translate(720,309) scale(-1,1)">Green</text>
<text class="sy" transform="translate(662,346.500) scale(-1,1)">Blue</text>
<text class="sy" transform="translate(662,369.500) scale(-1,1)">Blue</text>
<text class="s" x="628.500" y="284">Green</text>
<text class="s" x="628.500" y="309">Green</text>
<text class="s" x="589" y="346.500">Blue</text>
<text class="s" x="589" y="369.500">Blue</text>
<path d="M625 275H722M625 301H722M589 338H662M589 361H662" stroke="#f00000" stroke-width="1.800"/>

<!-- tab strip -->
<rect x="107" y="1055" width="989" height="20" fill="#f4f4f4"/>
<path d="M107 1054.500H1096" stroke="#a0a0a0" stroke-width="1.400"/>
<path d="M117 1055l6 15H164l6-15" fill="#f4f4f4" stroke="#666"/>
<text x="120" y="1068" style="font-size:11px;fill:#444">Platine 1</text>

<!-- Properties -->
<rect x="1097" y="79" width="106" height="996" fill="#cfd4e6"/>
<rect x="1097" y="79" width="106" height="17" fill="#000"/>
<text class="h" x="1141" y="92">Properties</text>
<rect x="1185" y="80" width="16" height="16" fill="#f4f4f4"/><path d="M1189 84l8 8M1197 84l-8 8" stroke="#111" stroke-width="1.500"/>
<text x="1099" y="123" style="font-weight:bold;font-size:11px;fill:#333">Board</text>
<path d="M1097 129.500H1202" stroke="#b0b4c4" stroke-width="1.500"/>
<text x="1100" y="149" style="font-size:11px">Width:</text>
<rect x="1101" y="155" width="45" height="14.500" fill="#000"/><text class="y" x="1144" y="166.500">100.00</text><use href="#sp" x="1150" y="156"/><text x="1160" y="166" style="fill:#555">mm</text>
<text x="1100" y="188" style="font-size:11px">Height:</text>
<rect x="1101" y="194" width="45" height="14.500" fill="#000"/><text class="y" x="1144" y="205.500">100.00</text><use href="#sp" x="1150" y="195"/><text x="1160" y="205" style="fill:#555">mm</text>
<text x="1100" y="235" style="font-size:11px;fill:#2a4a90">Area:</text><text x="1146" y="235" style="font-size:11px;fill:#1c1c90">100 cm²</text>
<text x="1100" y="258" style="font-size:11px">Name:</text>
<rect x="1101" y="264" width="85" height="19" fill="#fff"/><text x="1103" y="277" style="font-size:11px;fill:#444">Platine 1</text>
<rect x="1101.500" y="296.500" width="11" height="11" fill="#d8dcea" stroke="#777"/>
<text x="1116" y="307" style="font-size:11px">Multilayer</text>
<path d="M1204.500 78V1075" stroke="#9a9a9a"/>

<!-- DRC -->
<rect x="1206" y="79" width="198" height="996" fill="#e9cdb9"/>
<rect x="1206" y="79" width="198" height="17" fill="#000"/>
<text class="h" x="1297" y="92">DRC</text>
<rect x="1388" y="80" width="15" height="16" fill="#f4f4f4"/><path d="M1392 84l8 8M1400 84l-8 8" stroke="#111" stroke-width="1.500"/>
<rect x="1210.500" y="116.500" width="189" height="57" fill="none" stroke="#b0b0b0"/>
<rect x="1215" y="112" width="86" height="10" fill="#e9cdb9"/><text x="1217" y="121">Minimum distance</text>
<use href="#ck" x="1219" y="132"/><text x="1235" y="142">Copper:</text><rect x="1321" y="131" width="37" height="15" fill="#000"/><text class="y" x="1356" y="143">0.15</text><use href="#sp" x="1362" y="132"/><text x="1373" y="142.500">mm</text>
<use href="#ck" x="1219" y="151"/><text x="1235" y="161">Drillings:</text><rect x="1321" y="150" width="37" height="15" fill="#000"/><text class="y" x="1356" y="162">0.50</text><use href="#sp" x="1362" y="151"/><text x="1373" y="161.500">mm</text>
<rect x="1210.500" y="188.500" width="189" height="116" fill="none" stroke="#b0b0b0"/>
<rect x="1215" y="184" width="44" height="10" fill="#e9cdb9"/><text x="1217" y="193">Min/Max</text>
<use href="#ck" x="1219" y="204"/><text x="1235" y="214">Drilling min:</text><rect x="1321" y="203" width="37" height="15" fill="#000"/><text class="y" x="1356" y="215">0.30</text><use href="#sp" x="1362" y="204"/><text x="1373" y="214.500">mm</text>
<use href="#ck" x="1219" y="223.500"/><text x="1235" y="233.500">Drilling max:</text><rect x="1321" y="222.500" width="37" height="15" fill="#000"/><text class="y" x="1356" y="234.500">8.00</text><use href="#sp" x="1362" y="223.500"/><text x="1373" y="234">mm</text>
<use href="#ck" x="1219" y="243"/><text x="1235" y="253">Track min:</text><rect x="1321" y="242" width="37" height="15" fill="#000"/><text class="y" x="1356" y="254">0.20</text><use href="#sp" x="1362" y="243"/><text x="1373" y="253.500">mm</text>
<use href="#ck" x="1219" y="262.500"/><text x="1235" y="272.500">Annular ring min:</text><rect x="1321" y="261.500" width="37" height="15" fill="#000"/><text class="y" x="1356" y="273.500">0.20</text><use href="#sp" x="1362" y="262.500"/><text x="1373" y="273">mm</text>
<use href="#ck" x="1219" y="282"/><text x="1235" y="292">Silkscreen min:</text><rect x="1321" y="281" width="37" height="15" fill="#000"/><text class="y" x="1356" y="293">0.15</text><use href="#sp" x="1362" y="282"/><text x="1373" y="292.500">mm</text>
<rect x="1210.500" y="318.500" width="189" height="95" fill="none" stroke="#b0b0b0"/>
<rect x="1215" y="314" width="66" height="10" fill="#e9cdb9"/><text x="1217" y="323">Miscellaneous</text>
<use href="#ck" x="1219" y="335"/><text x="1235" y="345">Silkscreen over pads</text>
<use href="#ck" x="1219" y="354"/><text x="1235" y="364">Drilling on SMD pads</text>
<use href="#ck" x="1219" y="374"/><text x="1235" y="384">Pads without soldermask</text>
<use href="#ck" x="1219" y="393"/><text x="1235" y="403">Soldermask out of pads</text>
<rect x="1210" y="422" width="190" height="16.500" fill="#000080"/>
<text x="1305" y="434.500" style="fill:#c4c8ec;text-anchor:middle">0 Entries</text>
<rect x="1211.500" y="448.500" width="87" height="21" rx="2" fill="url(#btn)" stroke="#38b0e0" stroke-width="1.400"/>
<path d="M1224 453l7 6.500-7 6.500z" fill="#e06030" stroke="#b04020"/>
<text x="1237" y="463" style="font-size:11px;fill:#333">Complete...</text>
<rect x="1310.500" y="448.500" width="88" height="21" rx="2" fill="url(#btn)" stroke="#8a8a8a"/>
<path d="M1326 453l7 6.500-7 6.500z" fill="#f0e0d8" stroke="#c04020" stroke-width="1.400"/>
<text x="1339" y="463" style="font-size:11px;fill:#333">Window...</text>
<rect x="1211.500" y="480.500" width="188" height="17.500" rx="2" fill="#f0f0f0" stroke="#d4d4d4"/>
<text x="1304" y="493" style="fill:#8c8c8c;text-anchor:middle">Select all</text>
<rect x="1210.500" y="501.500" width="190" height="570" fill="#fff" stroke="#b8b0a8"/>

<!-- splitter -->
<rect x="1404" y="78" width="9" height="997" fill="#f0f0f0"/>
<path d="M1410 78V1075" stroke="#888" stroke-dasharray="1 2"/>

<!-- Macros -->
<rect x="1413" y="79" width="171" height="17" fill="#000"/>
<text x="1491" y="92" style="font-size:12.5px;font-weight:bold;fill:#e04444;text-anchor:middle">Macros</text>
<rect x="1567" y="80" width="16" height="16" fill="#f4f4f4"/><path d="M1571 84l8 8M1579 84l-8 8" stroke="#111" stroke-width="1.500"/>
<rect x="1413.500" y="99.500" width="170" height="630" fill="#fff" stroke="#b0b0b0"/>
<path d="M1426 115V153" stroke="#aaa" stroke-dasharray="1 1"/>
<g fill="#fff" stroke="#8a8a8a"><rect x="1422.500" y="105.500" width="7" height="7"/><rect x="1422.500" y="121.500" width="7" height="7"/><rect x="1422.500" y="136.500" width="7" height="7"/><rect x="1422.500" y="152.500" width="7" height="7"/></g>
<path d="M1424 109h4M1426 107v4M1424 125h4M1426 123v4M1424 140h4M1426 138v4M1424 156h4M1426 154v4" stroke="#2a3a8a"/>
<path d="M1430 109h5M1430 125h5M1430 140h5M1430 156h5" stroke="#aaa"/>
<g><text x="1436" y="113" style="font-size:11px">SMD</text><text x="1436" y="129" style="font-size:11px">Symbols</text><text x="1436" y="144" style="font-size:11px">Through-Hole (TH)</text><text x="1436" y="160" style="font-size:11px">USER</text></g>
<path d="M1413 732.500H1584" stroke="#999" stroke-dasharray="1 2"/>
<use href="#ck" x="1416" y="736"/><text x="1431" y="747" style="font-size:11px;fill:#333">Add as component</text>
<rect x="1418.500" y="757.500" width="12" height="12" fill="#0000c0" stroke="#000"/><rect x="1421" y="758" width="7" height="4" fill="#ccd"/><rect x="1421" y="765" width="7" height="4" fill="#111"/>
<path d="M1441 760h10M1443 760v10h6v-10M1444 760v-2h4v2M1445 762v7M1447 762v7" fill="#ddd" stroke="#333" stroke-width="1.200"/>
<path d="M1508 758a6.500 6.500 0 1 0 2 7" fill="none" stroke="#111" stroke-width="2"/><path d="M1505 755l5 2.500-3 4" fill="none" stroke="#111" stroke-width="1.300"/>
<circle cx="1527" cy="764" r="7" fill="#000"/><circle cx="1527" cy="764" r="2.500" fill="#f00"/>
<path d="M1549 755v7M1546.500 759l2.500 3.500 2.500-3.500M1544 765h10l2 3h-14zM1542 770h14" stroke="#111" fill="none"/>
<text x="1561" y="769" style="font-size:10.5px;fill:#333">TOP</text>
<rect x="1413.500" y="777.500" width="170" height="30" fill="#e6e6e6" stroke="#b0b0b0"/>
<rect x="1413" y="807" width="171" height="268" fill="#000"/>
<text x="1580" y="1069" style="font-size:11px;fill:#eaeaea;text-anchor:end">Drag and Drop</text>

<!-- status bar -->
<rect x="12" y="1075" width="1573" height="38" fill="#f0f0f0"/>
<path d="M12 1113.500H1585" stroke="#a4a4a4"/>
<rect x="16" y="1076" width="80" height="36" fill="#f4f4f4"/>
<text x="19" y="1091" style="fill:#555">X:</text><text x="92" y="1091" style="text-anchor:end;font-size:11px;fill:#333">100,000 mm</text>
<text x="19" y="1105" style="fill:#555">Y:</text><text x="92" y="1105" style="text-anchor:end;font-size:11px;fill:#444">4,316 mm</text>
<rect x="100" y="1076" width="178" height="36" fill="#f4f4f4"/>
<path d="M100 1093.500H146M146.500 1076V1112M170 1094V1112M193 1094V1112M216.500 1094V1112M240 1094V1112M263.500 1094V1112" stroke="#b4b4b4"/>
<text x="122" y="1088" style="font-size:11px;fill:#333;text-anchor:middle">visible</text><text x="122" y="1107" style="font-size:11px;fill:#333;text-anchor:middle">active</text>
<rect x="147" y="1076" width="117" height="17" fill="#000"/>
<text class="ly" x="158.500" y="1090" style="fill:#1a5cf0">C1</text><text class="ly" x="182" y="1090" style="fill:#f00000">S1</text><text class="ly" x="205" y="1090" style="fill:#00b000">C2</text><text class="ly" x="229" y="1090" style="fill:#e8d800">S2</text><text class="ly" x="252" y="1090" style="fill:#f4f4f4">0</text>
<g fill="#d4d4d4" stroke="#8a8a8a"><circle cx="157" cy="1103" r="5.500" fill="#c4d8e8"/><circle cx="180" cy="1103" r="5.500"/><circle cx="203" cy="1103" r="5.500"/><circle cx="227" cy="1103" r="5.500"/><circle cx="250" cy="1103" r="5.500"/></g>
<circle cx="157" cy="1103" r="3" fill="#0c5a9c"/>
<text x="271" y="1098" style="font-size:11px;fill:#333;text-anchor:middle">?</text>
<rect x="283" y="1076" width="35" height="36" fill="#f4f4f4"/><rect x="323" y="1076" width="35" height="36" fill="#f4f4f4"/><rect x="363" y="1076" width="35" height="36" fill="#f4f4f4"/><rect x="402" y="1076" width="1183" height="36" fill="#f4f4f4"/>
<rect x="289" y="1081" width="25" height="25" fill="#777"/>
<path d="M289 1087h6l9 9" fill="none" stroke="#000" stroke-width="4"/><path d="M289 1087h6l9 9" fill="none" stroke="#fff" stroke-width="1.200"/><circle cx="305" cy="1097" r="3.500" fill="#fff" stroke="#000" stroke-width="2.200"/>
<circle cx="340" cy="1093" r="7" fill="#000"/><circle cx="340" cy="1093" r="2" fill="#777"/><path d="M328 1093H353M340 1081V1105" stroke="#f00000" stroke-width="1.500"/>
<ellipse cx="380" cy="1093" rx="13" ry="6" transform="rotate(-30 380 1093)" fill="none" stroke="#333" stroke-width="2.600"/><path d="M370 1083l20 20M390 1083l-20 20" stroke="#f00000" stroke-width="1.500"/>
<path d="M410 1092.500H1570" stroke="#c0c0c0"/>
</svg>
</body></html>
